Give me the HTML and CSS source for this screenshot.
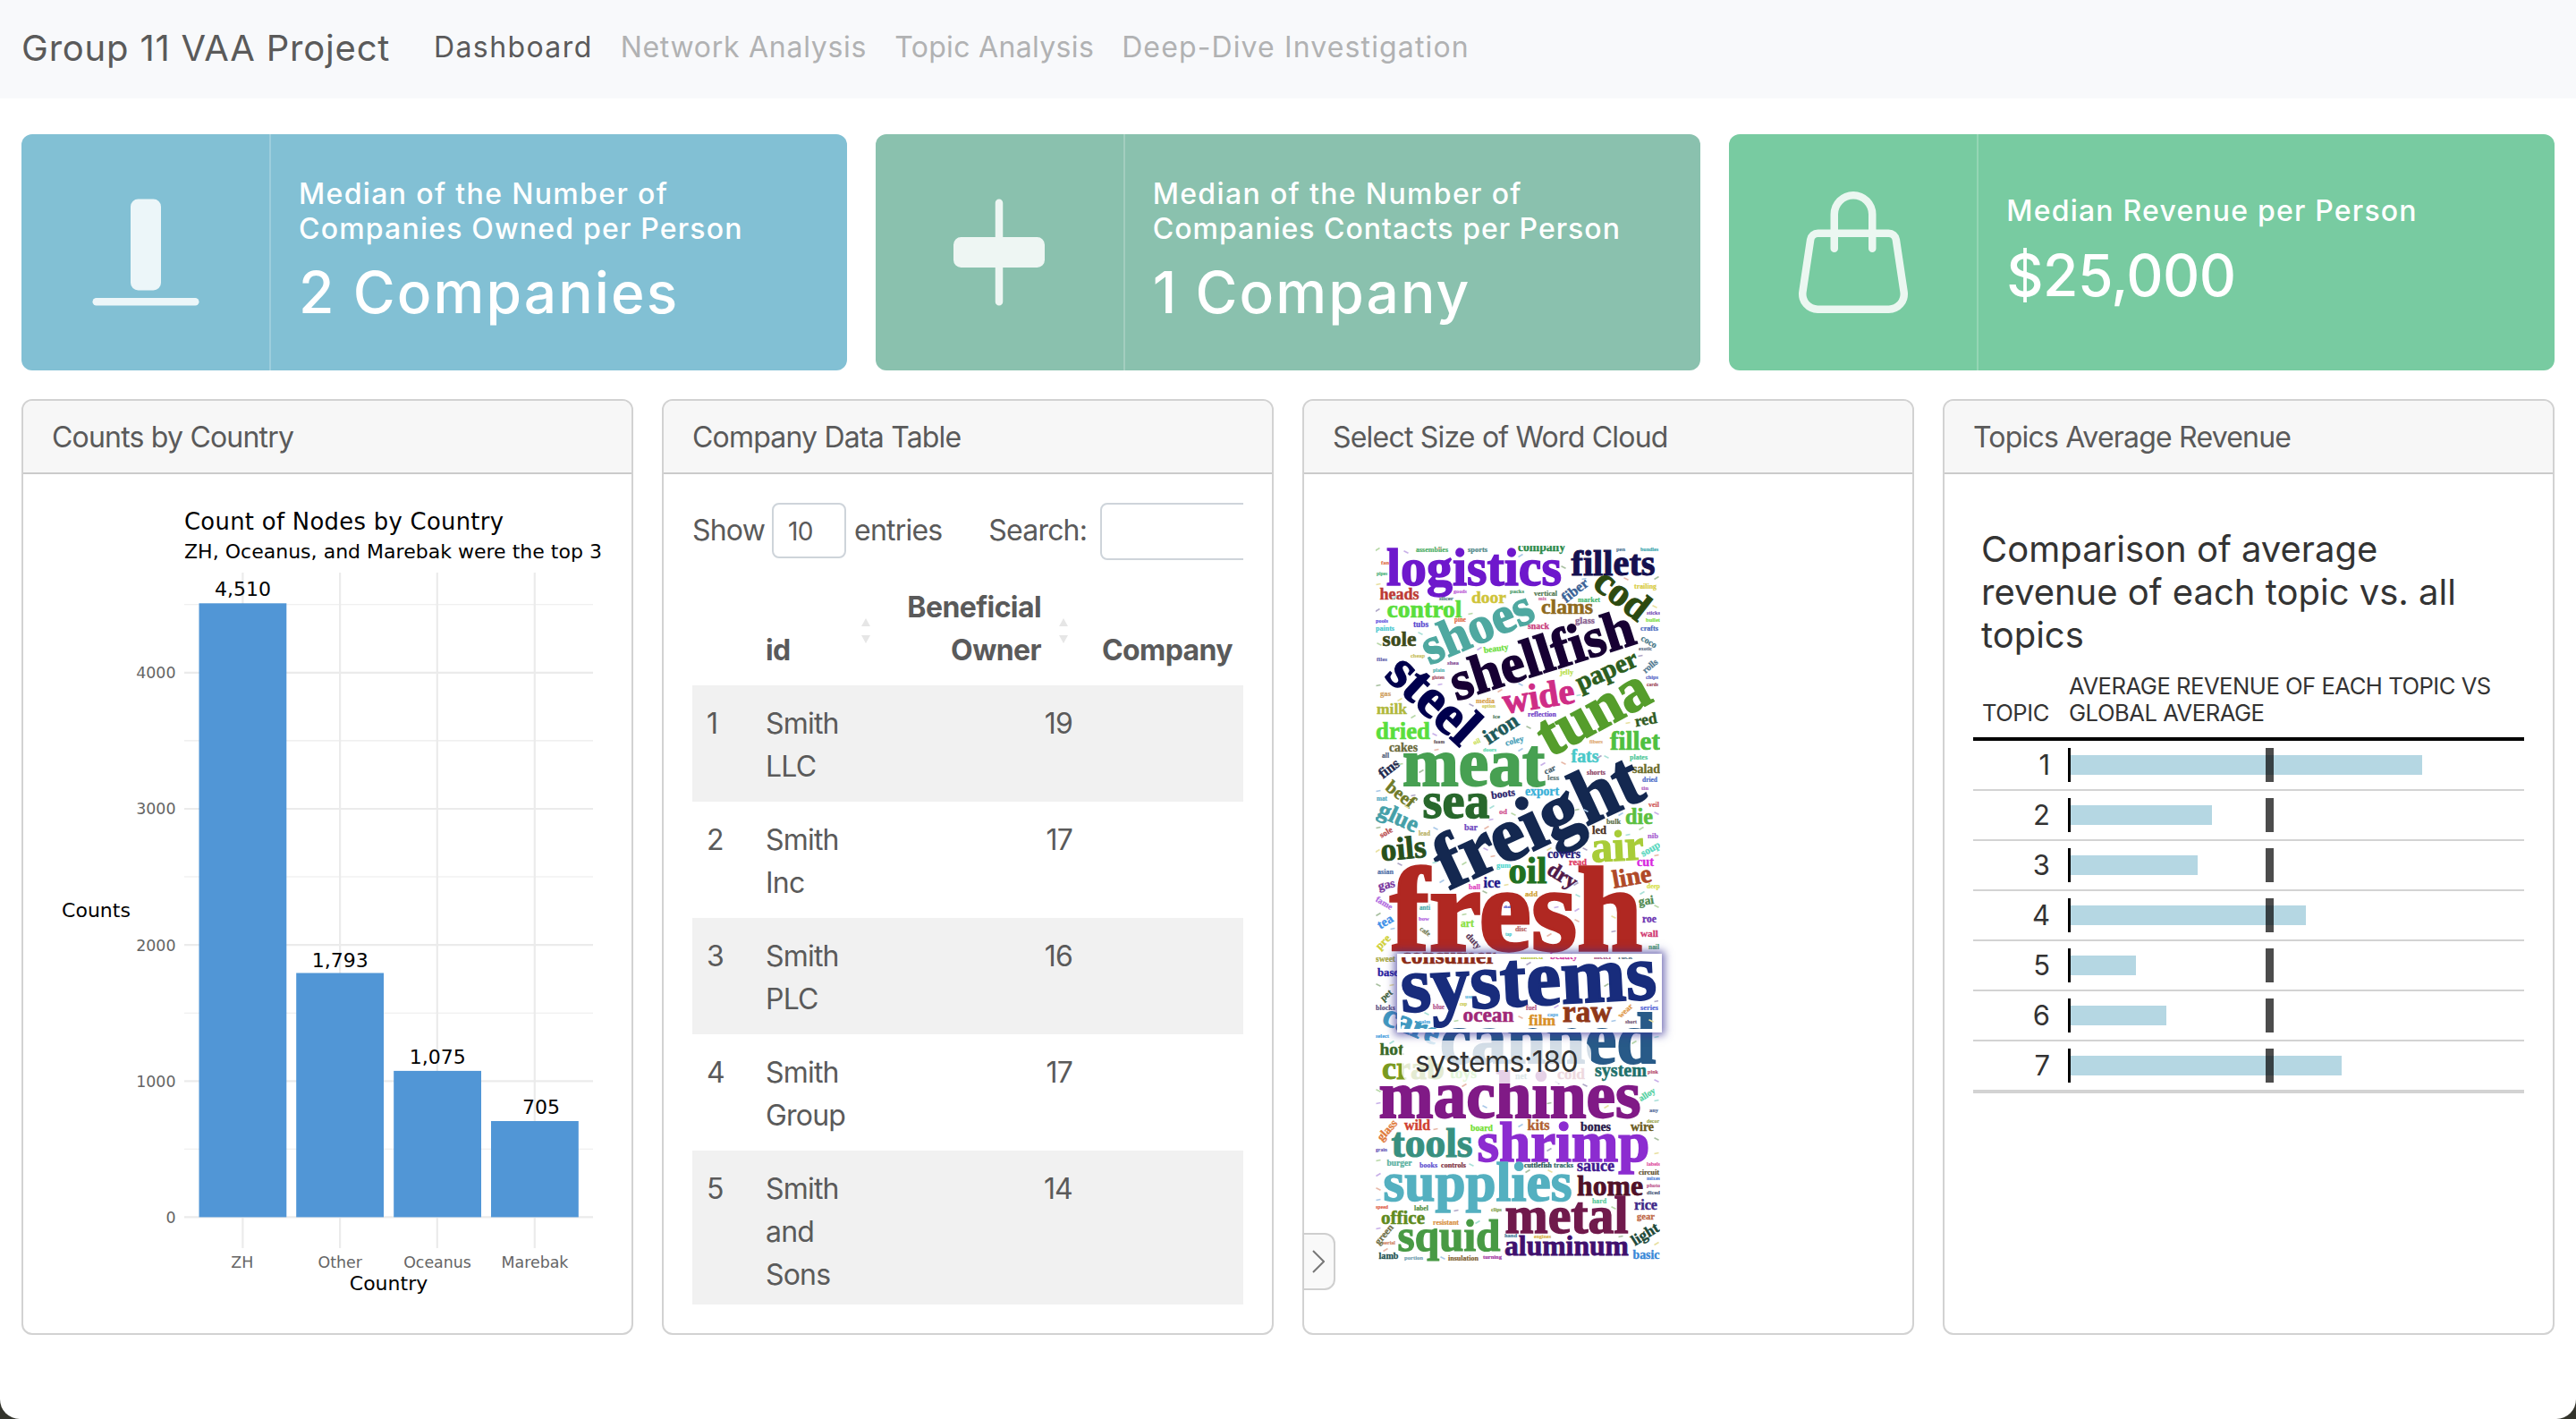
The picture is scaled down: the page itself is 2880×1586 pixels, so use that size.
FILE: index.html
```html
<!DOCTYPE html>
<html lang="en">
<head>
<meta charset="utf-8">
<title>Group 11 VAA Project</title>
<link rel="stylesheet" href="styles.css">
</head>
<body>
<div class="page">
  <nav class="navbar">
    <a class="brand">Group 11 VAA Project</a>
    <a class="nav-link active">Dashboard</a>
    <a class="nav-link network">Network Analysis</a>
    <a class="nav-link topic">Topic Analysis</a>
    <a class="nav-link deep">Deep-Dive Investigation</a>
  </nav>

  <main class="content">
    <section class="value-boxes">
      <article class="value-box blue">
        <div class="showcase">
          <svg viewBox="0 0 16 16"><rect x="6" y="1" width="4" height="12" rx="1"/><rect x="1" y="14" width="14" height="1" rx=".5"/></svg>
        </div>
        <div class="value-text">
          <p class="value-title"><span class="t1">Median of the Number of</span><br><span class="t2">Companies Owned per Person</span></p>
          <p class="value">2 Companies</p>
        </div>
      </article>
      <article class="value-box teal">
        <div class="showcase">
          <svg viewBox="0 0 16 16"><path d="M8 1a.5.5 0 0 1 .5.5V6H13a1 1 0 0 1 1 1v2a1 1 0 0 1-1 1H8.500v4.500a.5.5 0 0 1-1 0V10H3a1 1 0 0 1-1-1V7a1 1 0 0 1 1-1h4.500V1.500A.5.5 0 0 1 8 1z"/></svg>
        </div>
        <div class="value-text">
          <p class="value-title"><span class="t1">Median of the Number of</span><br><span class="t3">Companies Contacts per Person</span></p>
          <p class="value">1 Company</p>
        </div>
      </article>
      <article class="value-box green">
        <div class="showcase">
          <svg viewBox="0 0 16 16"><path d="M8 1a2 2 0 0 1 2 2v2H6V3a2 2 0 0 1 2-2zm3 4V3a3 3 0 1 0-6 0v2H3.360a1.500 1.500 0 0 0-1.483 1.277L.850 13.130A2.500 2.500 0 0 0 3.322 16h9.355a2.500 2.500 0 0 0 2.473-2.870l-1.028-6.853A1.500 1.500 0 0 0 12.640 5H11zm-1 1v1.500a.5.5 0 0 0 1 0V6h1.639a.5.5 0 0 1 .494.426l1.028 6.851A1.500 1.500 0 0 1 12.678 15H3.322a1.500 1.500 0 0 1-1.483-1.723l1.028-6.851A.5.5 0 0 1 3.360 6H5v1.500a.5.5 0 1 0 1 0V6h4z"/></svg>
        </div>
        <div class="value-text">
          <p class="value-title"><span class="t2">Median Revenue per Person</span></p>
          <p class="value amount">$25,000</p>
        </div>
      </article>
    </section>

    <section class="cards">
      <article class="card">
        <h2 class="card-header">Counts by Country</h2>
        <div class="card-body">
          <svg class="bar-chart" viewBox="58 562 616 895">
            <g class="grid minor">
              <path d="M206 1284.300H663M206 1132.200H663M206 980H663M206 827.900H663M206 675.700H663"/>
            </g>
            <g class="grid major">
              <path d="M206 1360.400H663M206 1208.300H663M206 1056.100H663M206 904H663M206 751.800H663M271.400 640V1395M380.100 640V1395M488.800 640V1395M597.800 640V1395"/>
            </g>
            <g class="bars">
              <rect x="222.500" y="674.300" width="97.800" height="686.100"/>
              <rect x="331.200" y="1087.500" width="97.800" height="272.900"/>
              <rect x="440.200" y="1196.900" width="97.800" height="163.500"/>
              <rect x="549" y="1253" width="97.800" height="107.400"/>
            </g>
            <text class="plot-title" x="206" y="592" textLength="357">Count of Nodes by Country</text>
            <text class="plot-label" x="206" y="624" textLength="467">ZH, Oceanus, and Marebak were the top 3</text>
            <g class="plot-label" text-anchor="middle">
              <text x="271.400" y="665.500">4,510</text>
              <text x="380.300" y="1080.500">1,793</text>
              <text x="489.200" y="1189">1,075</text>
              <text x="605" y="1245">705</text>
              <text x="434.500" y="1442">Country</text>
              <text x="107.500" y="1025">Counts</text>
            </g>
            <g class="tick" text-anchor="end">
              <text x="196.500" y="758">4000</text>
              <text x="196.500" y="910">3000</text>
              <text x="196.500" y="1062.500">2000</text>
              <text x="196.500" y="1214.500">1000</text>
              <text x="196.500" y="1366.500">0</text>
            </g>
            <g class="tick" text-anchor="middle">
              <text x="270.800" y="1417">ZH</text>
              <text x="380.300" y="1417">Other</text>
              <text x="489" y="1417">Oceanus</text>
              <text x="598" y="1417">Marebak</text>
            </g>
          </svg>
        </div>
      </article>

      <article class="card">
        <h2 class="card-header">Company Data Table</h2>
        <div class="card-body clipped">
          <div class="controls">
            <span>Show</span><span class="select">10</span><span>entries</span>
            <label class="search">Search:</label><span class="input"></span>
          </div>
          <table class="data">
            <colgroup><col class="c1"><col class="c2"><col class="c3"><col class="c4"></colgroup>
            <thead>
              <tr>
                <th></th>
                <th>id<svg class="sort" viewBox="0 0 10 28"><path d="M5 0l5 9H0zM5 28l5-9H0z"/></svg></th>
                <th class="num">Beneficial<br>Owner<svg class="sort" viewBox="0 0 10 28"><path d="M5 0l5 9H0zM5 28l5-9H0z"/></svg></th>
                <th>Company</th>
              </tr>
            </thead>
            <tbody>
              <tr><td>1</td><td>Smith<br>LLC</td><td class="num">19</td><td></td></tr>
              <tr><td>2</td><td>Smith<br>Inc</td><td class="num">17</td><td></td></tr>
              <tr><td>3</td><td>Smith<br>PLC</td><td class="num">16</td><td></td></tr>
              <tr><td>4</td><td>Smith<br>Group</td><td class="num">17</td><td></td></tr>
              <tr><td>5</td><td>Smith<br>and<br>Sons</td><td class="num">14</td><td></td></tr>
            </tbody>
          </table>
        </div>
      </article>

      <article class="card cloud-card">
        <h2 class="card-header">Select Size of Word Cloud</h2>
        <div class="card-body">
          <div class="cloud">
            <svg id="words" viewBox="1538 610 318 800"></svg>
            <div class="tooltip">systems:180</div>
            <div class="highlight"></div>
          </div>
        </div>
        <button class="sidebar-toggle" aria-label="Toggle sidebar">
          <svg viewBox="0 0 14 26"><path d="M1 1l12 12L1 25"/></svg>
        </button>
      </article>

      <article class="card">
        <h2 class="card-header">Topics Average Revenue</h2>
        <div class="card-body">
          <div class="topics">
            <h3 class="topics-title">Comparison of average<br>revenue of each topic vs. all<br>topics</h3>
            <div class="topics-head"><span>TOPIC</span><span>AVERAGE REVENUE OF EACH TOPIC VS<br>GLOBAL AVERAGE</span></div>
            <div class="topic-row"><span>1</span><div class="track"><i class="bar" style="width:393px"></i><i class="mark"></i></div></div>
            <div class="topic-row"><span>2</span><div class="track"><i class="bar" style="width:158px"></i><i class="mark"></i></div></div>
            <div class="topic-row"><span>3</span><div class="track"><i class="bar" style="width:142px"></i><i class="mark"></i></div></div>
            <div class="topic-row"><span>4</span><div class="track"><i class="bar" style="width:263px"></i><i class="mark"></i></div></div>
            <div class="topic-row"><span>5</span><div class="track"><i class="bar" style="width:73px"></i><i class="mark"></i></div></div>
            <div class="topic-row"><span>6</span><div class="track"><i class="bar" style="width:107px"></i><i class="mark"></i></div></div>
            <div class="topic-row last"><span>7</span><div class="track"><i class="bar" style="width:303px"></i><i class="mark"></i></div></div>
          </div>
        </div>
      </article>
    </section>
  </main>
</div>
<script src="cloud.js"></script>
</body>
</html>
```
FILE: styles.css
```css
* { box-sizing: border-box; }
body {
  margin: 0;
  background: #33342c;
  color: #5a5a5a;
  font: 32px/48px Inter, "Liberation Sans", sans-serif;
  letter-spacing: -0.8px;
}
p, h2, h3 { margin: 0; font-weight: 400; }
.page { height: 1586px; background: #fff; border-radius: 0 0 22px 22px; overflow: hidden; }

.navbar { display: flex; gap: 31px; height: 110px; padding: 24px 24px 0; background: #f8f9fb; }
.brand { flex: 0 0 430px; font-size: 40px; line-height: 60px; letter-spacing: 0.8px; white-space: nowrap; }
.nav-link { padding-top: 5px; color: #b1b2b3; white-space: nowrap; }
.nav-link.active { color: #5a5a5a; letter-spacing: 1.4px; }
.network { letter-spacing: 0.72px; }
.topic { letter-spacing: 0.33px; }
.deep { letter-spacing: 1.13px; }

.content { padding: 40px 24px 0; }
.value-boxes { display: grid; grid-template-columns: repeat(3, 1fr); gap: 32px; height: 264px; }
.value-box { display: flex; border-radius: 12px; color: #fff; }
.blue { background: #82c0d4; }
.teal { background: #8ac1ae; }
.green { background: #78cba1; }
.showcase { flex: 0 0 279px; display: flex; align-items: center; justify-content: center; border-right: 2px solid rgba(255, 255, 255, .22); }
.showcase svg { width: 136px; height: 136px; fill: rgba(255, 255, 255, .85); }
.value-text { display: flex; flex-direction: column; justify-content: center; gap: 14px; padding-left: 31px; font-weight: 500; white-space: nowrap; }
.value-title { line-height: 38.4px; font-weight: 500; }
.t1 { letter-spacing: 1.35px; }
.t2 { letter-spacing: 1.2px; }
.t3 { letter-spacing: 1px; }
.value { font-size: 64px; line-height: 76.8px; letter-spacing: 2.1px; font-weight: 500; }
.amount { letter-spacing: -0.6px; }

.cards { display: grid; grid-template-columns: repeat(4, 1fr); gap: 32px; height: 1045px; margin-top: 32px; }
.card { position: relative; display: flex; flex-direction: column; min-width: 0; border: 2px solid #d2d2d2; border-radius: 12px; overflow: hidden; }
.card-header { height: 82px; padding: 17px 32px 15px; background: #f7f7f7; border-bottom: 2px solid #cbcbcb; font-size: 32px; line-height: 48px; letter-spacing: -0.8px; }
.card-body { flex: 1; margin: 32px; min-height: 0; }
.clipped { overflow: hidden; }

.bar-chart { display: block; width: 616px; height: 895px; font-family: "DejaVu Sans", sans-serif; letter-spacing: 0; }
.grid { fill: none; stroke: #ebebeb; }
.major { stroke-width: 2.2; }
.minor { stroke-width: 1.1; }
.bars { fill: #5196d6; }
.plot-title { font-size: 25.8px; fill: #000; }
.plot-label { font-size: 22px; fill: #000; }
.tick { font-size: 17.4px; fill: #656565; }

.controls { display: flex; align-items: center; height: 62px; margin-bottom: 14px; width: 900px; }
.select { width: 83px; height: 62px; margin: 0 9px 0 8px; padding: 6px 16px; border: 2px solid #ced4da; border-radius: 8px; font-size: 28px; }
.search { margin-left: 52px; }
.input { width: 300px; height: 64px; margin: 1px 0 -1px 15px; border: 2px solid #ced4da; border-radius: 8px; }

.data { width: 900px; table-layout: fixed; border-collapse: collapse; }
.c1 { width: 66px; }
.c2 { width: 154px; }
.c3 { width: 221px; }
.data th, .data td { position: relative; padding: 19px 16px 15px; text-align: left; vertical-align: top; }
.data th { padding: 17px 16px 15px; vertical-align: bottom; font-weight: 700; letter-spacing: -0.6px; }
.data .num { text-align: right; }
.data th.num { padding-right: 51px; }
.data th:last-child { padding-left: 17px; }
.data tbody tr:nth-child(odd) { background: #f1f1f1; }
.data tbody tr:nth-child(odd) td { box-shadow: 0 1px 0 #f1f1f1; }
.sort { position: absolute; right: 21px; top: 53px; width: 10px; height: 28px; fill: #e6e6e6; }

.cloud-card { overflow: visible; }
.cloud-card .card-header { border-radius: 10px 10px 0 0; }
.cloud { position: relative; width: 318px; height: 800px; margin: 48px; }
.cloud svg { display: block; width: 318px; height: 800px; overflow: hidden; font-family: "Liberation Serif", serif; font-weight: 700; letter-spacing: 0; }
.highlight { position: absolute; left: 24px; top: 456px; width: 296px; height: 88px; border: 4px solid #fff; box-shadow: 0 0 9px 3px rgba(55, 50, 150, .7); }
.tooltip { position: absolute; left: 29px; top: 553px; height: 48px; padding: 0 15px; border-radius: 14px; background: rgba(255, 255, 255, .8); color: #333; line-height: 48px; letter-spacing: -0.5px; }
.sidebar-toggle { position: absolute; left: -2px; top: 930px; width: 37px; height: 64px; padding: 0 0 0 9px; display: flex; align-items: center; background: #f9f9f9; border: 2px solid #cfcfcf; border-radius: 0 12px 12px 0; }
.sidebar-toggle svg { width: 14px; height: 26px; fill: none; stroke: #777; stroke-width: 2; }

.topics { padding-top: 28px; color: #333; }
.topics-title { padding-left: 9px; font-size: 40px; line-height: 48px; letter-spacing: 0; white-space: nowrap; }
.topics-head { display: grid; grid-template-columns: 97px 1fr; align-items: end; gap: 0; padding: 18px 0 12px 10px; font-size: 25.6px; line-height: 30px; letter-spacing: -0.48px; border-bottom: 4px solid #000; white-space: nowrap; }
.topic-row { display: grid; grid-template-columns: 86px 510px; column-gap: 20px; align-items: center; height: 56px; border-bottom: 2px solid #d3d3d3; }
.topic-row span { text-align: right; font-size: 31px; letter-spacing: 0; line-height: 38px; }
.topic-row.last { height: 58px; border-bottom-width: 4px; }
.track { position: relative; display: flex; align-items: center; height: 38px; border-left: 3px solid #000; }
.bar { height: 22px; background: #b5d7e3; }
.mark { position: absolute; left: 218px; top: 0; width: 9px; height: 38px; background: rgba(0, 0, 0, .7); }
```
FILE: cloud.js
```js
// Each entry: word, x, baseline y, drawn length, colour, rotation.
// Rotated words are anchored at the middle of their baseline.
const words = [
  ["logistics", 1550, 654, 196, "#6e18cc"], ["fillets", 1756.5, 642.5, 94, "#15104f"],
  ["company", 1697, 616, 53, "#2c8a4a"], ["sports", 1641, 617, 22, "#508888"],
  ["assemblies", 1583, 617, 36, "#50b068"], ["pen", 1807, 616, 10, "#507898"], ["bundles", 1834, 616, 20, "#40a8b0"],
  ["cod", 1805, 675.5, 66, "#2c4a10", 38], ["shoes", 1658.5, 718, 131, "#4fa8a0", -23],
  ["shellfish", 1730, 751, 213, "#170033", -17.7], ["steel", 1589.5, 796, 117, "#00004d", 43],
  ["heads", 1542.5, 670, 44, "#bc3a34"], ["door", 1645, 674, 39, "#cfc43a"],
  ["control", 1550.5, 689.5, 84, "#5ade3c"], ["clams", 1723, 686, 58, "#8f6a1e"],
  ["fiber", 1764, 664, 33, "#3a6296", -38], ["vertical", 1715, 666, 26, "#507850"],
  ["goods", 1625, 663, 15, "#c060d8"], ["packs", 1688, 663, 16, "#50a070"], ["market", 1764, 673, 25, "#48b870"],
  ["trailing", 1827, 658, 25, "#d8cc40"], ["slicer", 1609, 671, 16, "#508080"], ["mix", 1720, 671, 9, "#d060a0"],
  ["sole", 1545.5, 721.5, 38, "#3c4a1c"], ["snack", 1708, 702.5, 24, "#c83a7a"], ["glass", 1761, 697, 22, "#886090"],
  ["tubs", 1580, 701, 17, "#5848d0"], ["paints", 1538, 705, 21, "#48c8d0"], ["pools", 1538, 696, 14, "#6050e0"],
  ["pipes", 1539, 643, 12, "#48b078"], ["fan", 1544, 631, 9, "#e07048"], ["pine", 1626, 695, 13, "#e06840"],
  ["sticks", 1841, 687, 15, "#7850b8"], ["bullet", 1840, 695, 16, "#80e048"], ["crafts", 1834, 705, 20, "#4868c0"],
  ["coco", 1842, 720, 19, "#487888", 30], ["exotic", 1832, 727, 15, "#607088"], ["rolls", 1847, 747, 19, "#507890", -40],
  ["beauty", 1673, 728, 28, "#6ce03c", -8], ["cheap", 1577, 735, 16, "#c8c060"], ["files", 1539, 739, 12, "#6868b0"],
  ["shea", 1618, 743, 13, "#885098"], ["plain", 1602, 751, 13, "#50b0b0"], ["gluten", 1601, 759, 14, "#a85068"],
  ["jelly", 1744, 754, 15, "#b8e048"], ["chips", 1840, 759, 14, "#5868c8"], ["cards", 1841, 767, 13, "#a04858"],
  ["wide", 1722, 791.5, 81, "#cf2d86", -9], ["paper", 1800, 758, 73, "#2c5e20", -24],
  ["tuna", 1791.5, 815, 133, "#559d2c", -28.5], ["media", 1650, 786, 21, "#d8a048"], ["option", 1657, 791, 15, "#d0c850"],
  ["reflection", 1708, 801, 32, "#7040c8"], ["iron", 1682, 821, 42, "#1f5a5a", -33],
  ["milk", 1539, 797.5, 34, "#b0b83c"], ["gas", 1543, 778, 12, "#d0a060"], ["ice", 1669, 803, 8, "#508060"],
  ["dried", 1538, 826, 61, "#5ade3c"], ["coley", 1694, 831, 21, "#48a0b8", -15], ["foam", 1603, 831, 12, "#605058"],
  ["red", 1841, 810, 25, "#2f5a22", -10], ["fillet", 1800, 837.5, 56, "#4fc040"], ["doors", 1658, 840, 15, "#58d8b0"],
  ["oil", 1652, 831, 8, "#c8e050", -25], ["fibers", 1777, 831, 15, "#e0a870"],
  ["fats", 1756.5, 852, 31, "#48c8c8"], ["salad", 1825, 864, 31, "#6b6b2a"], ["plates", 1822, 849, 20, "#50c898"],
  ["shorts", 1774, 866, 21, "#904868"], ["car", 1734, 863, 13, "#405868", -25], ["less", 1730, 872, 13, "#607878"],
  ["cakes", 1553, 840, 32, "#6a6a3a"], ["all", 1545, 847, 8, "#506078"], ["fins", 1556, 863, 25, "#1f2a50", -38],
  ["dried", 1836, 874, 17, "#4868c8"], ["tin", 1835, 883, 8, "#b060c0"], ["veil", 1843, 902, 12, "#d05858"],
  ["meat", 1568, 877.5, 159, "#47a052"], ["sea", 1590.5, 914, 75, "#28682c"],
  ["beef", 1562, 893, 36, "#6f7a28", 38], ["glue", 1560, 921, 47, "#45a0a8", 25], ["mat", 1539, 895, 12, "#50a8c0"],
  ["freight", 1731, 943, 246, "#142850", -25], ["boots", 1681, 891, 27, "#28206a", -8],
  ["export", 1705, 889, 38, "#38b0d8"], ["die", 1817, 921, 31, "#5cc040"], ["bulk", 1796, 921, 16, "#607048"],
  ["led", 1780, 932, 16, "#4a3020"], ["air", 1809, 962, 59, "#a8cc38", -3], ["oils", 1570, 960, 51, "#28501c", -5],
  ["soup", 1847, 952, 23, "#58d8c0", -30], ["covers", 1730, 959, 37, "#28207a"], ["read", 1754, 967, 20, "#e03860"],
  ["cut", 1830, 968, 19, "#d828e0"], ["nib", 1842, 937, 12, "#a860d0"], ["bar", 1637, 928, 15, "#7048c0"],
  ["lead", 1586, 934, 13, "#b8b060"], ["sole", 1551, 933, 15, "#b84848", -30], ["od", 1676, 910, 9, "#d05090"],
  ["oil", 1686.5, 987, 43, "#207020"], ["dry", 1743, 985, 35, "#501848", 32], ["gum", 1673, 970, 16, "#50d8d0"],
  ["line", 1826, 989, 44, "#b04a28", -10], ["ice", 1658.5, 991.5, 19, "#20188a"],
  ["gas", 1551, 993, 19, "#7a38a0", -12], ["ball", 1642, 994, 13, "#e040c0"], ["asian", 1540, 977, 18, "#5070a8"],
  ["deep", 1841, 993, 15, "#d8e048"], ["fame", 1546, 1012, 20, "#b068e0", 30], ["anti", 1587, 1017, 12, "#48a8a8"],
  ["bow", 1586, 1029, 12, "#b060e0"], ["cafe", 1592, 1043, 13, "#707850", 35], ["add", 1705, 1002, 14, "#d0a030"],
  ["fresh", 1554, 1061.5, 282, "#b02822"], ["tea", 1551, 1034, 18, "#4090e8", -32], ["pre", 1549, 1056, 18, "#d0d038", -45],
  ["art", 1633, 1036, 15, "#88e040"], ["gai", 1841, 1011, 17, "#508a50", -8], ["roe", 1836, 1031, 16, "#6a30b0"],
  ["wall", 1834, 1047, 20, "#d03870"], ["duty", 1645, 1054, 20, "#5a3858", 48], ["nail", 1843, 1061, 12, "#50a070"],
  ["dial", 1681, 1015, 8, "#4848c8"], ["disc", 1694, 1041, 13, "#b86060"], ["tap", 1683, 1046, 7, "#48c8c8"],
  ["sweet", 1538, 1075, 22, "#a8a840"], ["consumer", 1566.5, 1076.5, 106, "#8c2c18"],
  ["tanned", 1700, 1071.5, 25, "#b8c840"], ["beauty", 1733, 1071.5, 31, "#d038a0"], ["meter", 1782, 1072, 20, "#a04880"], ["rack", 1809, 1072, 16, "#607888"],
  ["base", 1540, 1091, 24, "#2820a0"], ["pet", 1552, 1115, 14, "#406038", -40], ["blocks", 1538, 1129, 22, "#605080"],
  ["systems", 1710, 1123.5, 286, "#182c7c", -3], ["ocean", 1635.5, 1141.5, 57, "#a02878"],
  ["film", 1709, 1145.5, 30, "#d89028"], ["raw", 1747, 1141.5, 55, "#903818"], ["blue", 1602, 1128, 13, "#b05088"],
  ["fuel", 1706, 1129, 12, "#b05080"], ["wear", 1819, 1132, 19, "#e09848", -42], ["caps", 1730, 1136, 12, "#58a8e0"],
  ["series", 1834, 1129, 20, "#5868d8"], ["palm", 1586, 1144, 13, "#50a8e0"], ["short", 1817, 1144, 13, "#705070"],
  ["use", 1638, 1116, 8, "#60b8e0"], ["cup", 1632, 1124, 8, "#c8c848"],
  ["care", 1574, 1156, 66, "#4098c0", 22], ["canned", 1610, 1187.5, 241, "#285a88"],
  ["select", 1538, 1160, 15, "#48a0e0"], ["hot", 1542.5, 1179, 27, "#3a6a28"], ["crab", 1545, 1205.5, 70, "#7a9a20"],
  ["toys", 1621, 1204.5, 30, "#70d040"], ["cold", 1741, 1205.5, 31, "#a84060"], ["net", 1694, 1206, 13, "#508888"],
  ["system", 1783, 1203, 58, "#20706a"], ["pink", 1842, 1200, 12, "#b85070"],
  ["machines", 1541.5, 1249, 293, "#801a86"], ["alloy", 1843, 1226, 20, "#50d0a0", -32],
  ["any", 1844, 1243, 10, "#506898"], ["decor", 1841, 1255, 14, "#a0a850"],
  ["wild", 1570, 1263, 29, "#d04030"], ["glass", 1554, 1266, 27, "#e07838", -48], ["board", 1644, 1264, 25, "#70e030"],
  ["kits", 1707.5, 1263, 25, "#b06030"], ["bones", 1767, 1264, 34, "#281848"], ["wire", 1823, 1264, 26, "#6a5a20"],
  ["tools", 1555.5, 1293, 91, "#389080"], ["shrimp", 1651.5, 1297.5, 193, "#8c2cd0"], ["grain", 1538, 1287, 13, "#6858b8"],
  ["burger", 1550.5, 1303, 28, "#58b0a0"], ["books", 1587, 1304.5, 20, "#6050d0"], ["controls", 1611, 1305, 28, "#803040"],
  ["cuttlefish", 1704, 1305, 31, "#205050"], ["tracks", 1737, 1305, 22, "#306868"], ["sauce", 1763, 1309, 42, "#401890"],
  ["labels", 1841, 1303, 15, "#e050a0"], ["circuit", 1832, 1313, 23, "#605030"], ["mixes", 1841, 1319, 15, "#5080d8"],
  ["photo", 1841, 1327, 15, "#c05890"], ["diced", 1841, 1335, 15, "#506080"],
  ["supplies", 1546.5, 1341.5, 211, "#54b0c0"], ["home", 1763, 1335.5, 74, "#501028"],
  ["speed", 1538, 1351, 14, "#e06048"], ["label", 1581, 1352.5, 16, "#509040"], ["clips", 1667, 1354, 12, "#80a048"],
  ["hard", 1780, 1344.5, 16, "#58c898"], ["rice", 1827, 1351.5, 26, "#402888"], ["gear", 1830, 1363, 20, "#c06848"],
  ["metal", 1682.5, 1377.5, 138, "#701a4c"], ["office", 1544, 1367.5, 49, "#608a20"],
  ["resistant", 1602, 1369, 29, "#d89040"], ["squid", 1562.5, 1397.5, 115, "#489a44"],
  ["green", 1550, 1382, 26, "#707048", -50], ["serial", 1546, 1391, 14, "#d08060"],
  ["light", 1842, 1384, 33, "#204838", -32], ["hand", 1682, 1383, 14, "#407898"], ["engines", 1715, 1384, 19, "#d8b048"],
  ["aluminum", 1682, 1403, 139, "#40106e"], ["basic", 1825.5, 1407, 30, "#3888d8"],
  ["lamb", 1541.5, 1407, 22, "#205050"], ["portion", 1570, 1408, 21, "#70a0b0"],
  ["insulation", 1619, 1409, 34, "#806030"], ["turning", 1658, 1407, 21, "#a030a0"]
];

const svg = document.getElementById("words");
const pen = document.createElement("canvas").getContext("2d");
pen.font = '700 100px "Liberation Serif"';

function addWord(word, x, y, length, color, angle) {
  const node = document.createElementNS("http://www.w3.org/2000/svg", "text");
  const size = 1.01 * length * 100 / pen.measureText(word).width;
  node.textContent = word;
  node.setAttribute("font-size", size.toFixed(2));
  node.setAttribute("textLength", length);
  node.setAttribute("lengthAdjust", "spacingAndGlyphs");
  node.setAttribute("fill", color);
  node.setAttribute("stroke", color);
  node.setAttribute("stroke-width", (size * 0.025).toFixed(2));
  if (angle === undefined) {
    node.setAttribute("x", x);
    node.setAttribute("y", y);
  } else {
    node.setAttribute("text-anchor", "middle");
    node.setAttribute("transform", `translate(${x} ${y}) rotate(${angle})`);
  }
  svg.appendChild(node);
}
words.forEach(w => addWord(...w));

// Short strokes for the words too small to read, in the gaps between the others.
const specks = [
  [1540,614],[1572,617],[1609,613],[1700,621],[1748,634],[1541,653],[1540,682],[1588,708],[1644,686],[1654,725],
  [1818,647],[1771,647],[1852,646],[1850,678],[1834,733],[1559,668],[1542,720],[1610,765],[1677,772],[1700,765],
  [1541,766],[1565,782],[1645,788],[1765,777],[1580,801],[1604,821],[1606,838],[1700,838],[1709,813],[1820,808],
  [1788,846],[1796,846],[1566,854],[1725,854],[1748,853],[1541,884],[1589,862],[1573,902],[1580,889],[1668,902],
  [1692,910],[1667,916],[1662,925],[1605,926],[1541,925],[1540,951],[1565,966],[1604,964],[1637,965],[1661,949],
  [1669,957],[1612,985],[1660,997],[1684,989],[1762,988],[1764,1001],[1637,1022],[1763,1017],[1763,1029],[1557,1038],
  [1541,1022],[1804,1025],[1804,1041],[1836,998],[1852,1013],[1740,1014],[1732,1045],[1773,906],[1763,905],[1732,949],
  [1772,949],[1820,933],[1835,926],[1852,909],[1852,956],[1812,910],[1541,1101],[1556,1101],[1709,1077],[1595,1133],
  [1628,1141],[1740,1125],[1700,1137],[1804,1141],[1796,1101],[1846,1141],[1852,1119],[1556,1165],[1541,1219],[1541,1233],
  [1637,1213],[1660,1237],[1732,1233],[1796,1237],[1772,1213],[1852,1159],[1827,1165],[1852,1208],[1605,1262],[1700,1258],
  [1852,1273],[1852,1289],[1732,1285],[1645,1302],[1541,1297],[1541,1313],[1541,1329],[1541,1341],[1708,1309],[1733,1309],
  [1628,1353],[1652,1366],[1804,1350],[1541,1373],[1549,1397],[1613,1406],[1812,1382],[1852,1390],[1741,1210],[1852,1230]
];
const tints = ["#b8d8a8", "#c8b0e8", "#e8b8a8", "#a8c8e8", "#a8c0a0", "#e8e0a0", "#b0a8c8", "#a8e0d8"];
specks.forEach(([x, y], i) => {
  const line = document.createElementNS("http://www.w3.org/2000/svg", "path");
  const rise = i % 3 === 0 ? -3 : i % 3 === 1 ? 2.5 : -1;
  line.setAttribute("d", `M${x - 2.5} ${y - rise / 2}l5 ${rise}`);
  line.setAttribute("stroke", tints[i % tints.length]);
  line.setAttribute("stroke-width", 1.6);
  svg.appendChild(line);
});
```
